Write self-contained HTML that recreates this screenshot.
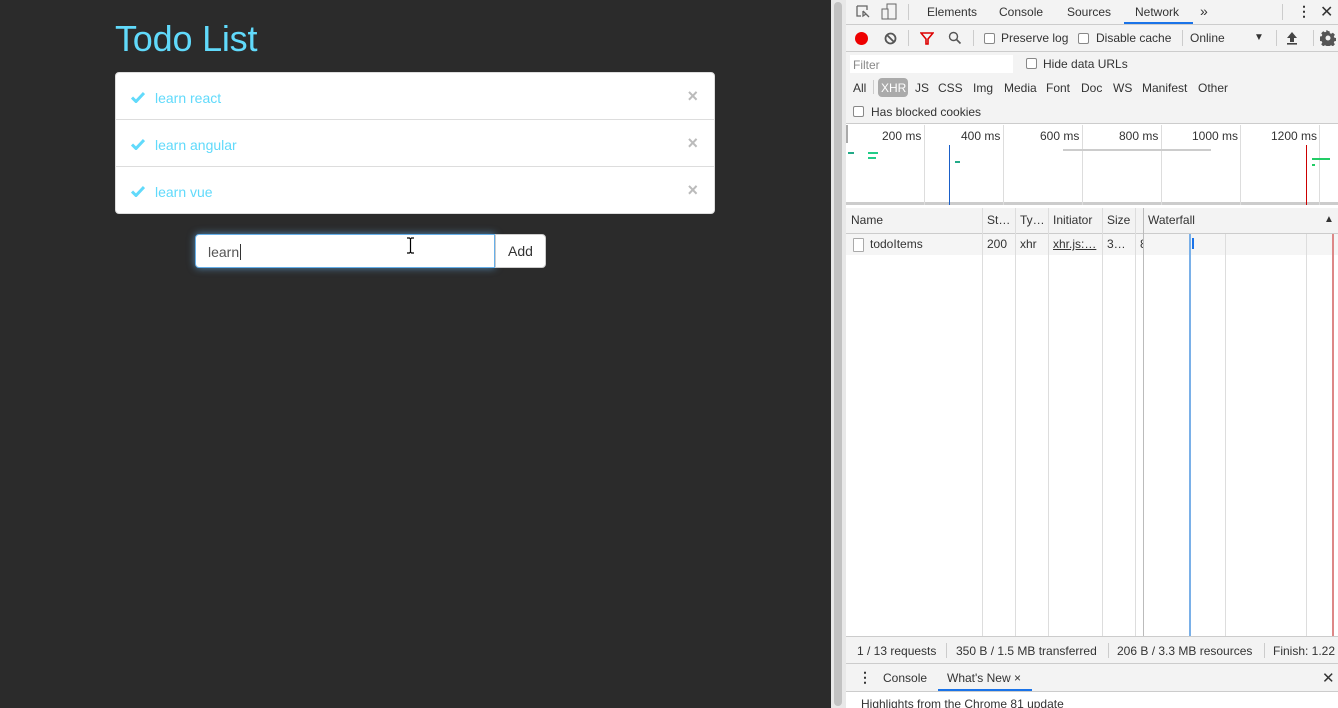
<!DOCTYPE html>
<html><head><meta charset="utf-8"><style>
*{box-sizing:border-box;margin:0;padding:0}
body{width:1338px;height:708px;overflow:hidden;font-family:"Liberation Sans",sans-serif;position:relative;background:#2b2b2b}
.abs{position:absolute}
.app{left:0;top:0;width:831px;height:708px;background:#2b2b2b}
h1{position:absolute;left:115px;top:18px;font-size:36px;font-weight:normal;color:#61dafb;letter-spacing:-0.2px}
.list{left:115px;top:72px;width:600px;height:142px;background:#fff;border:1px solid #ddd;border-radius:4px}
.item{position:absolute;left:0;width:598px;height:47px;border-bottom:1px solid #ddd;color:#61dafb;font-size:14px}
.item .t{position:absolute;left:39px;top:17px}
.item svg{position:absolute;left:15px;top:18px}
.item .x{position:absolute;right:16px;top:13px;color:#bbb;font-size:18px;font-weight:bold}
.inp{left:195px;top:234px;width:300px;height:34px;background:#fff;border:1px solid #66afe9;border-radius:4px 0 0 4px;box-shadow:0 0 8px rgba(102,175,233,.7);font-size:14px;color:#555;padding:9px 12px}
.btn{left:495px;top:234px;width:51px;height:34px;background:#fff;border:1px solid #ccc;border-radius:0 4px 4px 0;font-size:14px;color:#333;text-align:center;line-height:32px}
.sb{left:831px;top:0;width:15px;height:708px;background:#e8e8e8}
.sbt{left:834px;top:2px;width:8px;height:704px;background:#c2c2c2;border-radius:4px}
.dt{left:846px;top:0;width:492px;height:708px;background:#fff;font-size:12px;color:#333;overflow:hidden}
.bar{position:absolute;left:0;width:492px;background:#f3f3f3;border-bottom:1px solid #ccc}
.dt span{position:absolute;white-space:nowrap}
.cb{position:absolute;width:11px;height:11px;border:1px solid #888;border-radius:2px;background:#fff}
.vl{position:absolute;width:1px;background:#ddd}
</style></head><body>
<div class="abs app">
<h1>Todo List</h1>
<div class="abs list">
 <div class="item" style="top:0"><svg width="14" height="12" viewBox="0 0 14 12"><path d="M1 6.5l4 4L13 2" stroke="#61dafb" stroke-width="3" fill="none"/></svg><span class="t">learn react</span><span class="x">×</span></div>
 <div class="item" style="top:47px"><svg width="14" height="12" viewBox="0 0 14 12"><path d="M1 6.5l4 4L13 2" stroke="#61dafb" stroke-width="3" fill="none"/></svg><span class="t">learn angular</span><span class="x">×</span></div>
 <div class="item" style="top:94px;border-bottom:none"><svg width="14" height="12" viewBox="0 0 14 12"><path d="M1 6.5l4 4L13 2" stroke="#61dafb" stroke-width="3" fill="none"/></svg><span class="t">learn vue</span><span class="x">×</span></div>
</div>
<div class="abs inp">learn<span style="border-left:1px solid #333;margin-left:1px"></span></div>
<div class="abs btn">Add</div>
<svg class="abs" style="left:406px;top:237px" width="9" height="17"><path d="M1 1h2.5l1 1 1-1H8M4.5 2v13M1 16h2.5l1-1 1 1H8" stroke="#000" fill="none" stroke-width="1.2"/></svg>
</div>
<div class="abs sb"></div><div class="abs sbt"></div>
<div class="abs dt">
 <div class="bar" style="top:0;height:25px">
  <svg style="position:absolute;left:9px;top:4px" width="16" height="16"><path d="M2 2h10v4M2 2v10h4M8 7l6 6M8 7v5l3-2" stroke="#666" fill="none" stroke-width="1.3"/></svg>
  <svg style="position:absolute;left:35px;top:3px" width="16" height="17"><rect x="6" y="1" width="9" height="15" stroke="#666" fill="none"/><rect x="1" y="6" width="6" height="10" stroke="#666" fill="#f3f3f3"/></svg>
  <div class="vl" style="left:62px;top:4px;height:16px;background:#ccc"></div>
  <span style="left:81px;top:5px">Elements</span><span style="left:153px;top:5px">Console</span><span style="left:221px;top:5px">Sources</span><span style="left:289px;top:5px">Network</span>
  <div style="position:absolute;left:278px;top:22px;width:69px;height:2px;background:#1a73e8"></div>
  <span style="left:354px;top:3px;font-size:14px">»</span>
  <div class="vl" style="left:436px;top:4px;height:16px;background:#ccc"></div>
  <span style="left:451px;top:3px;font-size:14px;font-weight:bold">⋮</span><span style="left:474px;top:2px;font-size:16px">✕</span>
 </div>
 <div class="bar" style="top:25px;height:27px">
  <div style="position:absolute;left:9px;top:7px;width:13px;height:13px;border-radius:50%;background:#e00"></div>
  <svg style="position:absolute;left:38px;top:7px" width="13" height="13"><circle cx="6.5" cy="6.5" r="5" stroke="#555" stroke-width="1.8" fill="none"/><path d="M3 3l7 7" stroke="#555" stroke-width="1.8"/></svg>
  <div class="vl" style="left:62px;top:5px;height:16px;background:#ccc"></div>
  <svg style="position:absolute;left:74px;top:7px" width="14" height="13"><path d="M1 1h12L8 7v5H6V7z" stroke="#d00" stroke-width="1.6" fill="none"/></svg>
  <svg style="position:absolute;left:102px;top:6px" width="14" height="14"><circle cx="5.5" cy="5.5" r="4" stroke="#555" stroke-width="1.4" fill="none"/><path d="M8.5 8.5l4 4" stroke="#555" stroke-width="1.6"/></svg>
  <div class="vl" style="left:127px;top:5px;height:16px;background:#ccc"></div>
  <div class="cb" style="left:138px;top:8px"></div><span style="left:155px;top:6px">Preserve log</span>
  <div class="cb" style="left:232px;top:8px"></div><span style="left:250px;top:6px">Disable cache</span>
  <div class="vl" style="left:336px;top:5px;height:16px;background:#ccc"></div>
  <span style="left:344px;top:6px">Online</span><span style="left:408px;top:7px;font-size:10px">▼</span>
  <div class="vl" style="left:430px;top:5px;height:16px;background:#ccc"></div>
  <svg style="position:absolute;left:440px;top:6px" width="12" height="14"><path d="M6 1L1 7h3v4h4V7h3z" fill="#444"/><rect x="1" y="12" width="10" height="1.6" fill="#444"/></svg>
  <div class="vl" style="left:467px;top:5px;height:16px;background:#ccc"></div>
  <svg style="position:absolute;left:474px;top:5px" width="16" height="16" viewBox="0 0 16 16"><path d="M8 1l1.5.2.4 2 1.3.6 1.7-1.1 2 2-1.1 1.7.6 1.3 2 .4v2.8l-2 .4-.6 1.3 1.1 1.7-2 2-1.7-1.1-1.3.6-.4 2H6.6l-.4-2-1.3-.6-1.7 1.1-2-2 1.1-1.7-.6-1.3-2-.4V6.6l2-.4.6-1.3-1.1-1.7 2-2 1.7 1.1 1.3-.6.4-2z" fill="#555"/><circle cx="8" cy="8" r="2.5" fill="#f3f3f3"/></svg>
 </div>
 <div style="position:absolute;left:0;top:52px;width:492px;height:72px;background:#f3f3f3;border-bottom:1px solid #ccc">
  <div style="position:absolute;left:4px;top:3px;height:18px;width:163px;background:#fff"></div>
  <span style="left:7px;top:6px;color:#888">Filter</span>
  <div class="cb" style="left:180px;top:6px"></div><span style="left:197px;top:5px">Hide data URLs</span>
  <span style="left:7px;top:29px">All</span>
  <div class="vl" style="left:27px;top:28px;height:14px;background:#ccc"></div>
  <div style="position:absolute;left:32px;top:26px;width:30px;height:19px;background:#aaa;border-radius:4px"></div>
  <span style="left:35px;top:29px;color:#fff">XHR</span>
  <span style="left:69px;top:29px">JS</span><span style="left:92px;top:29px">CSS</span><span style="left:127px;top:29px">Img</span><span style="left:158px;top:29px">Media</span><span style="left:200px;top:29px">Font</span><span style="left:235px;top:29px">Doc</span><span style="left:267px;top:29px">WS</span><span style="left:296px;top:29px">Manifest</span><span style="left:352px;top:29px">Other</span>
  <div class="cb" style="left:7px;top:54px"></div><span style="left:25px;top:53px">Has blocked cookies</span>
 </div>
 <div style="position:absolute;left:0;top:125px;width:492px;height:80px;background:#fff;border-bottom:3px solid #ccc">
  <div class="vl" style="left:0;top:0;height:18px;width:2px;background:#aaa"></div>
  <div class="vl" style="left:78px;top:0;height:80px"></div><div class="vl" style="left:157px;top:0;height:80px"></div><div class="vl" style="left:236px;top:0;height:80px"></div><div class="vl" style="left:315px;top:0;height:80px"></div><div class="vl" style="left:394px;top:0;height:80px"></div><div class="vl" style="left:473px;top:0;height:80px"></div>
  <span style="left:36px;top:4px">200 ms</span><span style="left:115px;top:4px">400 ms</span><span style="left:194px;top:4px">600 ms</span><span style="left:273px;top:4px">800 ms</span><span style="left:346px;top:4px">1000 ms</span><span style="left:425px;top:4px">1200 ms</span>
  <div style="position:absolute;left:103px;top:20px;width:1px;height:60px;background:#1a5fc8"></div>
  <div style="position:absolute;left:460px;top:20px;width:1px;height:60px;background:#c00"></div>
  <div style="position:absolute;left:217px;top:24px;width:148px;height:2px;background:#ccc"></div>
  <div style="position:absolute;left:2px;top:27px;width:6px;height:2px;background:#2a8"></div>
  <div style="position:absolute;left:22px;top:27px;width:10px;height:2px;background:#2c8"></div>
  <div style="position:absolute;left:22px;top:32px;width:8px;height:2px;background:#2c8"></div>
  <div style="position:absolute;left:109px;top:36px;width:5px;height:2px;background:#2a8"></div>
  <div style="position:absolute;left:466px;top:33px;width:18px;height:2px;background:#2c6"></div>
  <div style="position:absolute;left:466px;top:39px;width:3px;height:2px;background:#2c6"></div>
 </div>
 <div style="position:absolute;left:0;top:208px;width:492px;height:26px;background:#f3f3f3;border-bottom:1px solid #ccc">
  <span style="left:5px;top:5px">Name</span><span style="left:141px;top:5px">St…</span><span style="left:174px;top:5px">Ty…</span><span style="left:207px;top:5px">Initiator</span><span style="left:261px;top:5px">Size</span><span style="left:302px;top:5px">Waterfall</span><span style="left:478px;top:6px;font-size:10px">▲</span>
 </div>
 <div style="position:absolute;left:0;top:234px;width:492px;height:21px;background:#f5f5f5"></div>
 <div class="cb" style="left:7px;top:238px;width:11px;height:14px;border-color:#aaa;border-radius:1px"></div>
 <span style="left:24px;top:237px">todoItems</span><span style="left:141px;top:237px">200</span><span style="left:174px;top:237px">xhr</span><span style="left:207px;top:237px;text-decoration:underline">xhr.js:…</span><span style="left:261px;top:237px">3…</span>
 <div style="position:absolute;left:290px;top:236px;width:7px;height:16px;overflow:hidden"><span style="left:4px;top:1px">8</span></div>
 <div class="vl" style="left:136px;top:208px;height:428px"></div><div class="vl" style="left:169px;top:208px;height:428px"></div><div class="vl" style="left:202px;top:208px;height:428px"></div><div class="vl" style="left:256px;top:208px;height:428px"></div><div class="vl" style="left:289px;top:208px;height:428px"></div><div class="vl" style="left:297px;top:208px;height:428px;background:#bbb"></div>
 <div class="vl" style="left:379px;top:234px;height:402px"></div><div class="vl" style="left:460px;top:234px;height:402px"></div>
 <div style="position:absolute;left:343px;top:234px;width:2px;height:402px;background:#7ab0e8"></div>
 <div style="position:absolute;left:346px;top:238px;width:2px;height:11px;background:#1a73e8"></div>
 <div style="position:absolute;left:486px;top:234px;width:2px;height:402px;background:#d88"></div>
 <div class="bar" style="top:636px;height:28px;border-top:1px solid #ccc">
  <span style="left:11px;top:7px">1 / 13 requests</span><div class="vl" style="left:100px;top:6px;height:15px;background:#ccc"></div>
  <span style="left:110px;top:7px">350 B / 1.5 MB transferred</span><div class="vl" style="left:262px;top:6px;height:15px;background:#ccc"></div>
  <span style="left:271px;top:7px">206 B / 3.3 MB resources</span><div class="vl" style="left:418px;top:6px;height:15px;background:#ccc"></div>
  <span style="left:427px;top:7px">Finish: 1.22</span>
 </div>
 <div class="bar" style="top:664px;height:28px">
  <span style="left:12px;top:5px;font-size:14px;font-weight:bold">⋮</span>
  <span style="left:37px;top:7px">Console</span><span style="left:101px;top:7px">What's New ×</span>
  <div style="position:absolute;left:92px;top:25px;width:94px;height:2px;background:#1a73e8"></div>
  <span style="left:476px;top:5px;font-size:15px">✕</span>
 </div>
 <span style="left:15px;top:697px">Highlights from the Chrome 81 update</span>
</div>
</body></html>
